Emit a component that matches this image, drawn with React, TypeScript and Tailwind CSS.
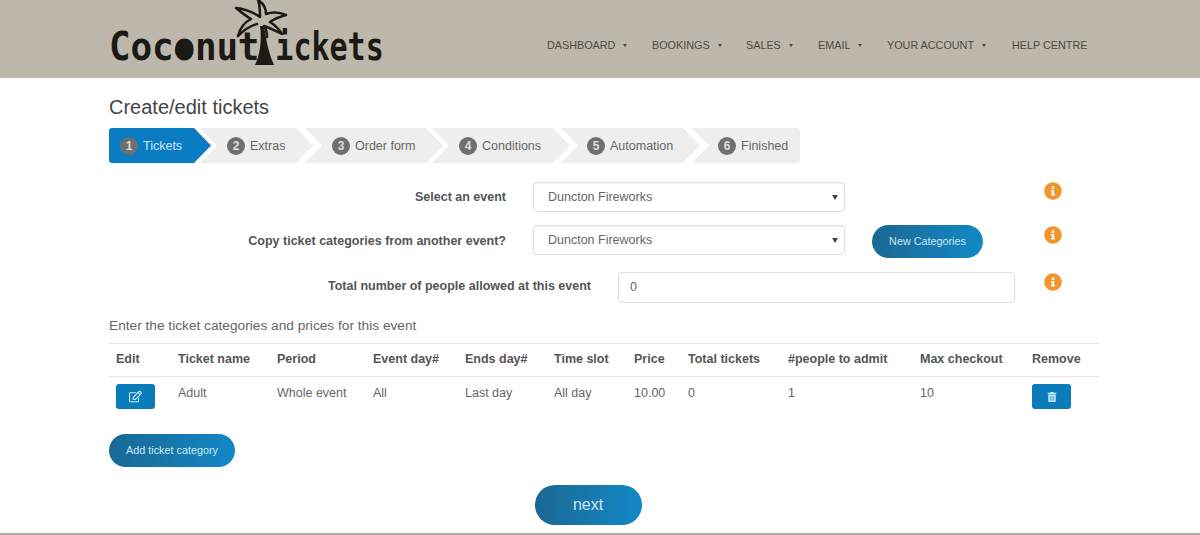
import { FaInfoCircle, FaRegEdit, FaTrashAlt } from 'react-icons/fa';

const navItems = [
  { label: 'DASHBOARD', width: 'w-[105px]', caret: true },
  { label: 'BOOKINGS', width: 'w-[94px]', caret: true },
  { label: 'SALES', width: 'w-[72px]', caret: true },
  { label: 'EMAIL', width: 'w-[69px]', caret: true },
  { label: 'YOUR ACCOUNT', width: 'w-[125px]', caret: true },
  { label: 'HELP CENTRE', width: 'w-[76px]', caret: false },
];

const steps = [
  { n: 1, label: 'Tickets', box: 'w-[102px] pl-[11px] bg-[#0a7cc4] text-[#cfe6f5] z-10 rounded-l-[3px] [clip-path:polygon(0_0,85px_0,100%_50%,85px_100%,0_100%)]' },
  { n: 2, label: 'Extras', box: 'w-[113px] -ml-[11px] pl-[27px] bg-[#eeeeee] text-[#666] [clip-path:polygon(0_0,96px_0,100%_50%,96px_100%,0_100%,17px_50%)]' },
  { n: 3, label: 'Order form', box: 'w-[138px] -ml-[8px] pl-[27px] bg-[#eeeeee] text-[#666] [clip-path:polygon(0_0,121px_0,100%_50%,121px_100%,0_100%,17px_50%)]' },
  { n: 4, label: 'Conditions', box: 'w-[138px] -ml-[11px] pl-[27px] bg-[#eeeeee] text-[#666] [clip-path:polygon(0_0,121px_0,100%_50%,121px_100%,0_100%,17px_50%)]' },
  { n: 5, label: 'Automation', box: 'w-[139px] -ml-[9px] pl-[26px] bg-[#eeeeee] text-[#666] [clip-path:polygon(0_0,122px_0,100%_50%,122px_100%,0_100%,17px_50%)]' },
  { n: 6, label: 'Finished', box: 'w-[108px] -ml-[8px] pl-[26px] bg-[#eeeeee] text-[#666] rounded-r-[3px] [clip-path:polygon(0_0,100%_0,100%_100%,0_100%,17px_50%)]' },
];

const columns = [
  { title: 'Edit', width: 'w-[62px]' },
  { title: 'Ticket name', width: 'w-[99px]' },
  { title: 'Period', width: 'w-[96px]' },
  { title: 'Event day#', width: 'w-[92px]' },
  { title: 'Ends day#', width: 'w-[89px]' },
  { title: 'Time slot', width: 'w-[80px]' },
  { title: 'Price', width: 'w-[54px]' },
  { title: 'Total tickets', width: 'w-[100px]' },
  { title: '#people to admit', width: 'w-[132px]' },
  { title: 'Max checkout', width: 'w-[112px]' },
  { title: 'Remove', width: 'w-[74px]' },
];

const rowValues = ['Adult', 'Whole event', 'All', 'Last day', 'All day', '10.00', '0', '1', '10'];

function PalmLogo() {
  return (
    <svg viewBox="0 0 56 66" className="w-[56px] h-[66px] -ml-[26px] -mr-[14px] shrink-0">
      {/* fronds, drawn as outlined leaves */}
      <path
        d="M27 17 C20 12 12 9 3 8 C9 13 13 16 18 19 C12 22 7 28 5 36 C11 30 17 26 24 24 M27 17 C27 11 27 5 25 0 C30 3 33 8 33 14 C39 12 46 12 53 15 C46 17 41 19 37 22 C42 25 46 29 49 34 C43 31 37 28 31 26 C33 29 34 33 34 37"
        fill="none"
        stroke="#1c1a17"
        strokeWidth="2.5"
        strokeLinejoin="round"
        strokeLinecap="round"
      />
      {/* trunk */}
      <path d="M27 26 C29 40 27 55 22 65 L41 65 C36 54 33 40 31 26 Z" fill="#1c1a17" />
    </svg>
  );
}

function FakeSelect({ value }: { value: string }) {
  return (
    <div className="w-[312px] h-[30px] bg-white border border-[#dddddd] rounded-[4px] shadow-[inset_0_1px_1px_rgba(0,0,0,0.05)] pl-[14px] pr-[6px] flex items-center justify-between text-[#666]">
      <span className="mt-[1px]">{value}</span>
      <span className="w-0 h-0 border-x-[3px] border-x-transparent border-t-[5px] border-t-[#444]" />
    </div>
  );
}

function PillButton({ label, box }: { label: string; box: string }) {
  return (
    <button className={`${box} rounded-full bg-gradient-to-r from-[#1a6894] to-[#1188c6] text-[#cfe6f2] flex items-center justify-center`}>
      {label}
    </button>
  );
}

function SquareButton({ children }: { children: React.ReactNode }) {
  return (
    <button className="w-[39px] h-[25px] bg-[#0b7cba] rounded-[3px] text-[#cfe9f7] flex items-center justify-center">
      {children}
    </button>
  );
}

export default function App() {
  return (
    <div className="w-[1200px] h-[535px] overflow-hidden bg-white font-['Liberation_Sans',Arial,sans-serif] text-[12.5px] text-[#555] flex flex-col border-b-2 border-[#aaa89f]">
      <header className="h-[78px] shrink-0 bg-[#bdb8ab] pl-[109px] flex items-start">
        <div className="w-[438px] h-[78px] flex items-start overflow-hidden">
          <div className="flex items-end h-[66px] text-[#1c1a17] font-['DejaVu_Sans_Mono',monospace] font-bold whitespace-nowrap">
            <span className="text-[36px] leading-[36px] tracking-[-0.2px] -mb-[1px] scale-y-110 origin-bottom">
              Coc
              <span className="relative inline-block">
                o
                <span className="absolute left-[2px] right-[2px] top-[12px] bottom-[7px] rounded-full bg-[#1c1a17]" />
              </span>
              nut
            </span>
            <PalmLogo />
            <span className="text-[30px] leading-[30px] -mb-[1px] scale-y-[1.32] origin-bottom">ickets</span>
          </div>
        </div>
        <nav className="flex items-center h-[78px] pt-[12px] text-[10.8px] text-[#4d4a42]">
          {navItems.map((item) => (
            <div key={item.label} className={`${item.width} shrink-0 flex items-center whitespace-nowrap`}>
              <span>{item.label}</span>
              {item.caret && <span className="ml-[8px] w-0 h-0 border-x-[2.5px] border-x-transparent border-t-[3px] border-t-[#4d4a42]" />}
            </div>
          ))}
        </nav>
      </header>

      <main className="flex-1 px-[109px] pt-[16px]">
        <h1 className="text-[20px] leading-[26px] text-[#444]">Create/edit tickets</h1>

        <div className="flex mt-[8px] h-[35px]">
          {steps.map((step) => (
            <div key={step.n} className={`${step.box} relative shrink-0 h-[35px] flex items-center gap-[5px] whitespace-nowrap`}>
              <span className="w-[18px] h-[18px] rounded-full bg-[#6f6f6f] text-[#ddd] text-[12px] font-bold flex items-center justify-center">
                {step.n}
              </span>
              <span className="mt-[1px]">{step.label}</span>
            </div>
          ))}
        </div>

        <div className="mt-[19px] flex items-center h-[30px]">
          <label className="w-[397px] text-right font-bold">Select an event</label>
          <div className="ml-[27px]">
            <FakeSelect value="Duncton Fireworks" />
          </div>
          <FaInfoCircle className="ml-[199px] -mt-[12px] text-[#f0962c] text-[18px]" />
        </div>

        <div className="mt-[13px] flex items-center h-[32px]">
          <label className="w-[397px] text-right font-bold">Copy ticket categories from another event?</label>
          <div className="ml-[27px] -mt-[2px]">
            <FakeSelect value="Duncton Fireworks" />
          </div>
          <PillButton label="New Categories" box="ml-[27px] w-[111px] h-[33px] text-[10.8px]" />
          <FaInfoCircle className="ml-[61px] -mt-[13px] text-[#f0962c] text-[18px]" />
        </div>

        <div className="mt-[15px] flex items-center h-[31px]">
          <label className="w-[482px] text-right font-bold -mt-[2px]">Total number of people allowed at this event</label>
          <div className="ml-[27px] w-[397px] h-[31px] bg-white border border-[#dddddd] rounded-[4px] pl-[11px] flex items-center text-[#666]">
            0
          </div>
          <FaInfoCircle className="ml-[29px] -mt-[12px] text-[#f0962c] text-[18px]" />
        </div>

        <p className="mt-[15px] leading-[16px] text-[13.7px] text-[#666]">Enter the ticket categories and prices for this event</p>

        <table className="mt-[9px] w-[990px] table-fixed border-collapse">
          <thead>
            <tr className="h-[33px] border-y border-[#e6e6e6]">
              {columns.map((col) => (
                <th key={col.title} className={`${col.width} pl-[7px] pb-[2px] text-left font-bold whitespace-nowrap`}>
                  {col.title}
                </th>
              ))}
            </tr>
          </thead>
          <tbody>
            <tr className="h-[33px]">
              <td className="pl-[7px] pt-[7px] align-top">
                <SquareButton>
                  <FaRegEdit className="text-[13px]" />
                </SquareButton>
              </td>
              {rowValues.map((value, i) => (
                <td key={i} className="pl-[7px] pt-[8px] align-top leading-[17px] whitespace-nowrap text-[#666]">
                  {value}
                </td>
              ))}
              <td className="pl-[7px] pt-[7px] align-top">
                <SquareButton>
                  <FaTrashAlt className="text-[10px]" />
                </SquareButton>
              </td>
            </tr>
          </tbody>
        </table>

        <PillButton label="Add ticket category" box="mt-[24px] w-[126px] h-[33px] text-[10.8px]" />

        <div className="mt-[18px] flex justify-center pr-[24px]">
          <PillButton label="next" box="w-[107px] h-[40px] text-[16px]" />
        </div>
      </main>
    </div>
  );
}
